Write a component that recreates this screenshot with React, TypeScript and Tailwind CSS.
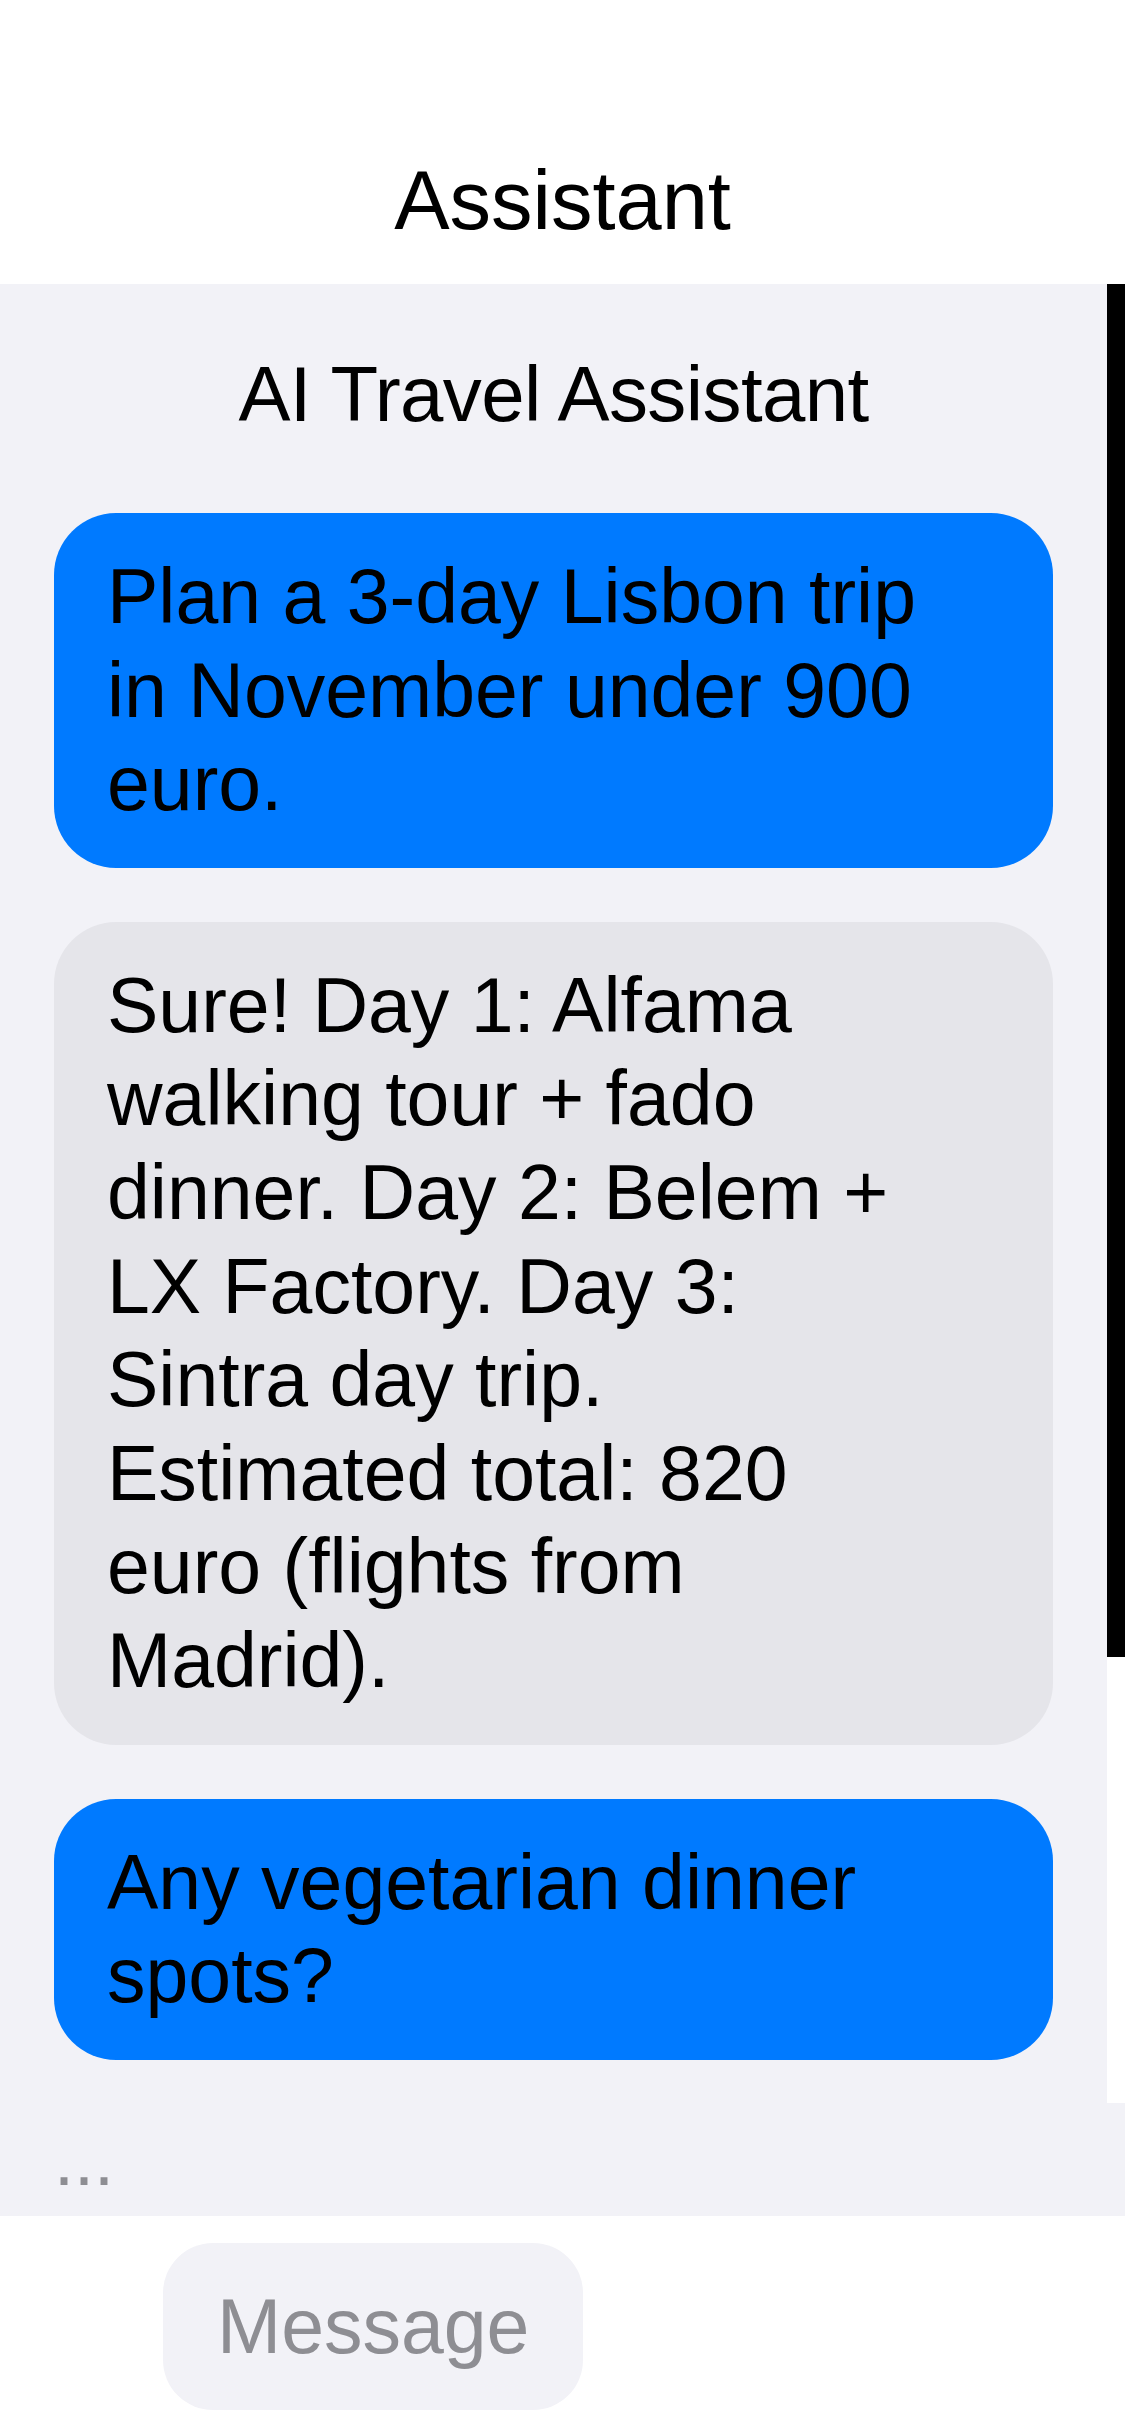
import React from 'react';

const MESSAGES = [
    { id: 1, from: 'user', text: 'Plan a 3-day Lisbon trip in November under 900 euro.' },
    {
        id: 2,
        from: 'assistant',
        text: 'Sure! Day 1: Alfama walking tour + fado dinner. Day 2: Belem + LX Factory. Day 3: Sintra day trip. Estimated total: 820 euro (flights from Madrid).',
    },
    { id: 3, from: 'user', text: 'Any vegetarian dinner spots?' },
];

const App: React.FC = () => {
    return (
        <div className="w-[1125px] h-[2436px] flex flex-col bg-white text-black font-['Liberation_Sans',Arial,sans-serif]">
            {/* Nav title */}
            <header className="h-[284px] shrink-0 pt-[153px] text-center text-[83px] leading-[normal]">
                Assistant
            </header>

            {/* Chat scroll area */}
            <div className="h-[1819px] shrink-0 flex bg-[#F2F2F7] overflow-hidden">
                <div className="flex-1 flex flex-col pt-[65px]">
                    <h1 className="text-center text-[78px] leading-[normal] tracking-[-0.6px]">
                        AI Travel Assistant
                    </h1>
                    <div className="mt-[73px] px-[54px] flex flex-col gap-[54px]">
                        {MESSAGES.map(m => (
                            <div
                                key={m.id}
                                className={
                                    m.from === 'user'
                                        ? 'rounded-[62px] bg-[#007AFF] pl-[53px] pr-[107px] py-[37px] text-[77px] leading-[93.6px]'
                                        : 'rounded-[62px] bg-[#E5E5EA] pl-[53px] pr-[107px] py-[37px] text-[77px] leading-[93.6px]'
                                }
                            >
                                {m.text}
                            </div>
                        ))}
                    </div>
                </div>

                {/* Scrollbar */}
                <div className="w-[18px] shrink-0 bg-white">
                    <div className="h-[1373px] bg-black" />
                </div>
            </div>

            {/* Typing indicator */}
            <div className="h-[113px] shrink-0 bg-[#F2F2F7] pl-[54px] py-[16px] text-[72px] leading-[normal] text-[#8E8E93]">
                ...
            </div>

            {/* Composer */}
            <div className="flex-1 bg-white pt-[27px] pl-[163px]">
                <div className="inline-flex rounded-[50px] bg-[#F2F2F7] px-[54px] py-[39px] text-[77px] leading-[normal] text-[#8E8E93]">
                    Message
                </div>
            </div>
        </div>
    );
};

export default App;
